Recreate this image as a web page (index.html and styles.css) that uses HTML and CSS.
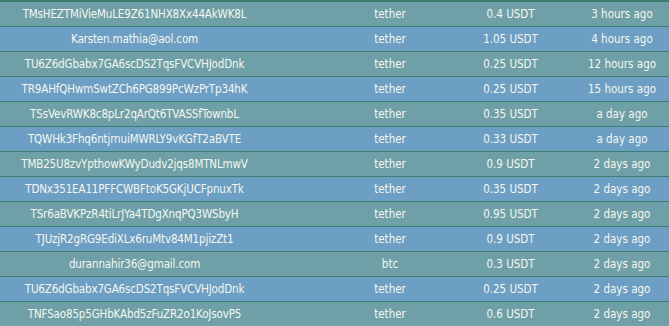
FILE: index.html
```html
<!DOCTYPE html>
<html>
<head>
<meta charset="utf-8">
<link rel="stylesheet" href="styles.css">
</head>
<body>
<div class="table">
  <div class="row teal"><span class="c1">TMsHEZTMiVieMuLE9Z61NHX8Xx44AkWK8L</span><span class="c2">tether</span><span class="c3">0.4 USDT</span><span class="c4">3 hours ago</span></div>
  <div class="row blue"><span class="c1">Karsten.mathia@aol.com</span><span class="c2">tether</span><span class="c3">1.05 USDT</span><span class="c4">4 hours ago</span></div>
  <div class="row teal"><span class="c1">TU6Z6dGbabx7GA6scDS2TqsFVCVHJodDnk</span><span class="c2">tether</span><span class="c3">0.25 USDT</span><span class="c4">12 hours ago</span></div>
  <div class="row blue"><span class="c1">TR9AHfQHwmSwtZCh6PG899PcWzPrTp34hK</span><span class="c2">tether</span><span class="c3">0.25 USDT</span><span class="c4">15 hours ago</span></div>
  <div class="row teal"><span class="c1">TSsVevRWK8c8pLr2qArQt6TVASSfTownbL</span><span class="c2">tether</span><span class="c3">0.35 USDT</span><span class="c4">a day ago</span></div>
  <div class="row blue"><span class="c1">TQWHk3Fhq6ntjrnuiMWRLY9vKGfT2aBVTE</span><span class="c2">tether</span><span class="c3">0.33 USDT</span><span class="c4">a day ago</span></div>
  <div class="row teal"><span class="c1">TMB25U8zvYpthowKWyDudv2jqs8MTNLmwV</span><span class="c2">tether</span><span class="c3">0.9 USDT</span><span class="c4">2 days ago</span></div>
  <div class="row blue"><span class="c1">TDNx351EA11PFFCWBFtoK5GKjUCFpnuxTk</span><span class="c2">tether</span><span class="c3">0.35 USDT</span><span class="c4">2 days ago</span></div>
  <div class="row teal"><span class="c1">TSr6aBVKPzR4tiLrJYa4TDgXnqPQ3WSbyH</span><span class="c2">tether</span><span class="c3">0.95 USDT</span><span class="c4">2 days ago</span></div>
  <div class="row blue"><span class="c1">TJUzjR2gRG9EdiXLx6ruMtv84M1pjizZt1</span><span class="c2">tether</span><span class="c3">0.9 USDT</span><span class="c4">2 days ago</span></div>
  <div class="row teal"><span class="c1">durannahir36@gmail.com</span><span class="c2">btc</span><span class="c3">0.3 USDT</span><span class="c4">2 days ago</span></div>
  <div class="row blue"><span class="c1">TU6Z6dGbabx7GA6scDS2TqsFVCVHJodDnk</span><span class="c2">tether</span><span class="c3">0.25 USDT</span><span class="c4">2 days ago</span></div>
  <div class="row teal"><span class="c1">TNFSao85p5GHbKAbd5zFuZR2o1KoJsovP5</span><span class="c2">tether</span><span class="c3">0.6 USDT</span><span class="c4">2 days ago</span></div>
</div>
</body>
</html>
```

FILE: styles.css
```css
html, body {
  margin: 0;
  padding: 0;
  background: #6fa0a7;
  overflow: hidden;
}
.table {
  width: 669px;
  border-top: 2px solid #3b7e6e;
  font-family: "DejaVu Sans Condensed", "DejaVu Sans", sans-serif;
  font-stretch: condensed;
  font-size: 11.5px;
  color: #f6f6f0;
}
.row {
  display: grid;
  grid-template-columns: 330px 120px 121px 98px;
  height: 24px;
  border-bottom: 1px solid #3b7e6e;
  align-items: center;
  text-align: center;
  white-space: nowrap;
}
.teal { background: #6fa0a7; }
.blue { background: #6c9fc3; }
.c1 { padding-right: 61px; letter-spacing: -0.15px; }
.c4 { margin-right: -4px; }
```
